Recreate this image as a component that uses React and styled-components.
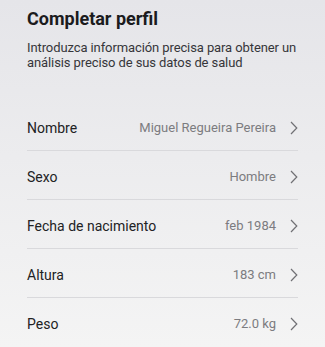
import React from "react";
import styled, { createGlobalStyle } from "styled-components";

const Global = createGlobalStyle`
  html, body { margin: 0; padding: 0; }
  body {
    font-family: Roboto, "Noto Sans", sans-serif;
    -webkit-font-smoothing: antialiased;
  }
`;

const Page = styled.div`
  width: 325px;
  height: 347px;
  overflow: hidden;
  box-sizing: border-box;
  padding: 0 27px;
  background: linear-gradient(180deg, #e5e5e9 0%, #ececee 45%, #f4f4f4 100%);
`;

const Header = styled.header`
  height: 103px;
  box-sizing: border-box;
  padding-top: 8px;
`;

const Title = styled.h1`
  margin: 0;
  font-size: 18px;
  line-height: 21px;
  font-weight: 700;
  color: #1b1b1d;
`;

const Subtitle = styled.p`
  margin: 11px -6px 0 0;
  font-size: 13px;
  line-height: 15px;
  letter-spacing: -0.1px;
  color: #36363a;
`;

const List = styled.ul`
  list-style: none;
  margin: 0;
  padding: 0;
`;

const Row = styled.li`
  display: flex;
  align-items: center;
  height: 48px;
  box-sizing: border-box;
  padding-top: 3px;
  border-bottom: ${(p) => (p.$last ? "none" : "1px solid #d9d9dc")};
  & + & { height: 49px; }
`;

const Label = styled.span`
  flex: 1;
  font-size: 14px;
  line-height: 16px;
  color: #222224;
`;

const Value = styled.span`
  font-size: 13px;
  line-height: 16px;
  color: #7c7c80;
  margin-right: 14px;
`;

const Chevron = () => (
  <svg width="8" height="14" viewBox="0 0 8 14" fill="none">
    <path d="M1 1 L6.8 7 L1 13" stroke="#707074" strokeWidth="1.2" />
  </svg>
);

const rows = [
  ["Nombre", "Miguel Regueira Pereira"],
  ["Sexo", "Hombre"],
  ["Fecha de nacimiento", "feb 1984"],
  ["Altura", "183 cm"],
  ["Peso", "72.0 kg"],
];

export default function App() {
  return (
    <>
      <Global />
      <Page>
        <Header>
          <Title>Completar perfil</Title>
          <Subtitle>
            Introduzca información precisa para obtener un análisis preciso de sus datos de salud
          </Subtitle>
        </Header>
        <List>
          {rows.map(([l, v], i) => (
            <Row key={l} $last={i === rows.length - 1}>
              <Label>{l}</Label>
              <Value>{v}</Value>
              <Chevron />
            </Row>
          ))}
        </List>
      </Page>
    </>
  );
}
